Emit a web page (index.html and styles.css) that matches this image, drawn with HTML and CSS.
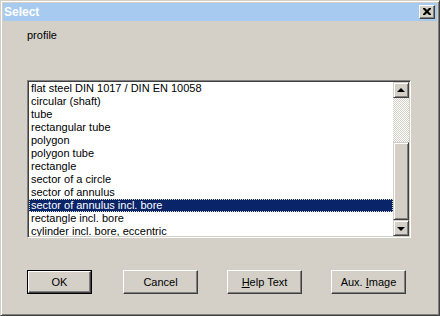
FILE: index.html
```html
<html lang="en">
<head>
    <meta charset="UTF-8">
    <title>Select</title>
    <link rel="stylesheet" href="styles.css">
</head>
<body>

    <div class="window">
        <div class="titlebar">
            <span class="title">Select</span>
            <div class="close">
                <svg width="8" height="7" viewBox="0 0 8 7">
                    <path d="M0 0h2l2 2l2 -2h2v1l-2.5 2.5l2.5 2.5v1h-2l-2 -2l-2 2h-2v-1l2.5 -2.5l-2.5 -2.5z" fill="#000"/>
                </svg>
            </div>
        </div>

        <div class="content">
            <div class="label">profile</div>

            <div class="listbox">
                <ul class="items">
                    <li>flat steel DIN 1017 / DIN EN 10058</li>
                    <li>circular (shaft)</li>
                    <li>tube</li>
                    <li>rectangular tube</li>
                    <li>polygon</li>
                    <li>polygon tube</li>
                    <li>rectangle</li>
                    <li>sector of a circle</li>
                    <li>sector of annulus</li>
                    <li class="selected">sector of annulus incl. bore</li>
                    <li>rectangle incl. bore</li>
                    <li>cylinder incl. bore, eccentric</li>
                </ul>
                <div class="scrollbar">
                    <div class="arrow up"><span></span></div>
                    <div class="track"></div>
                    <div class="thumb"></div>
                    <div class="arrow down"><span></span></div>
                </div>
            </div>

            <div class="buttons">
                <div class="default"><button class="btn btn-ok">OK</button></div>
                <button class="btn">Cancel</button>
                <button class="btn"><u>H</u>elp Text</button>
                <button class="btn">Aux. <u>I</u>mage</button>
            </div>
        </div>
    </div>

</body>
</html>
```

FILE: styles.css
```css
body {
    margin: 0;
    font-family: "Liberation Sans", Arial, sans-serif;
    font-size: 11px;
    background-color: #d4d0c8;
}

.window {
    width: 440px;
    height: 316px;
    box-sizing: border-box;
    background-color: #d4d0c8;
    border: 1px solid;
    border-color: #d4d0c8 #404040 #404040 #d4d0c8;
    box-shadow: inset 1px 1px #fff, inset -1px -1px #808080;
    padding: 2px;
}

.titlebar {
    height: 18px;
    background-color: #a6caf0;
    display: flex;
    align-items: flex-start;
    justify-content: space-between;
}

.title {
    color: white;
    font-weight: bold;
    font-size: 12px;
    line-height: 18px;
    padding-left: 1px;
}

.close {
    width: 16px;
    height: 14px;
    box-sizing: border-box;
    margin: 2px 2px 0 0;
    background-color: #d4d0c8;
    border: 1px solid;
    border-color: #fff #404040 #404040 #fff;
    box-shadow: inset -1px -1px #808080;
    display: flex;
    justify-content: center;
    align-items: center;
}

.close svg {
    display: block;
    margin: -1px 0 0 -1px;
}

.content {
    padding: 8px 0 0 24px;
}

.label {
    line-height: 13px;
    height: 13px;
}

/* lista */
.listbox {
    margin-top: 38px;
    width: 384px;
    height: 158px;
    box-sizing: border-box;
    border: 1px solid;
    border-color: #808080 #fff #fff #808080;
    box-shadow: inset 1px 1px #404040, inset -1px -1px #d4d0c8;
    padding: 1px;
    background-color: white;
    display: flex;
    overflow: hidden;
}

.items {
    list-style: none;
    margin: 0;
    padding: 0;
    flex: 1;
    overflow: hidden;
}

.items li {
    height: 13px;
    line-height: 13px;
    padding-left: 2px;
    white-space: nowrap;
    box-sizing: border-box;
}

.items li.selected {
    background-color: #0a246a;
    color: white;
    outline: 1px dotted #e0e0c0;
    outline-offset: -1px;
}

.scrollbar {
    width: 16px;
    display: flex;
    flex-direction: column;
}

.arrow {
    height: 16px;
    box-sizing: border-box;
    background-color: #d4d0c8;
    border: 1px solid;
    border-color: #d4d0c8 #404040 #404040 #d4d0c8;
    box-shadow: inset 1px 1px #fff, inset -1px -1px #808080;
    display: flex;
    justify-content: center;
    align-items: center;
}

.arrow span {
    width: 0;
    height: 0;
    border-left: 4px solid transparent;
    border-right: 4px solid transparent;
}

.arrow.up span {
    border-bottom: 4px solid black;
    margin-top: -1px;
}

.arrow.down span {
    border-top: 4px solid black;
    margin-top: 1px;
}

.track {
    height: 44px;
    background-color: #fff;
    background-image: repeating-conic-gradient(#d4d0c8 0 25%, #fff 0 50%);
    background-size: 2px 2px;
}

.thumb {
    flex: 1;
    box-sizing: border-box;
    background-color: #d4d0c8;
    border: 1px solid;
    border-color: #d4d0c8 #404040 #404040 #d4d0c8;
    box-shadow: inset 1px 1px #fff, inset -1px -1px #808080;
}

/* botones */
.buttons {
    margin-top: 32px;
    display: flex;
    align-items: center;
}

.btn {
    font-family: "Liberation Sans", Arial, sans-serif;
    font-size: 11px;
    color: black;
    width: 75px;
    height: 24px;
    box-sizing: border-box;
    background-color: #d4d0c8;
    border: 1px solid;
    border-color: #fff #404040 #404040 #fff;
    box-shadow: inset -1px -1px #808080, inset 1px 1px #d4d0c8;
    padding: 0;
    margin: 0 29px 0 0;
}

.default {
    border: 1px solid black;
    margin-right: 31px;
    display: flex;
}

.btn-ok {
    width: 63px;
    height: 22px;
    margin: 0;
}
```
